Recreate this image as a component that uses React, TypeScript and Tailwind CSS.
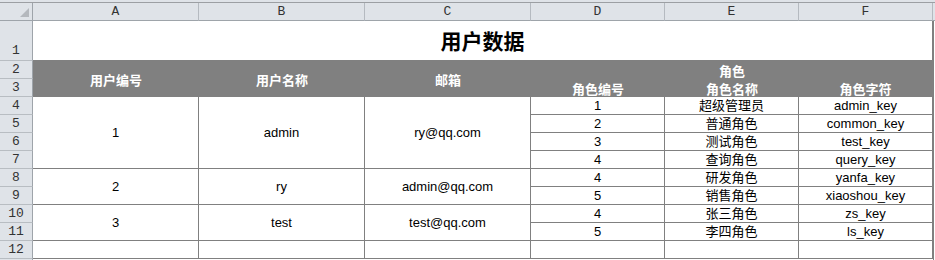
import React from "react";

const roles = [
  { id: "1", name: "超级管理员", key: "admin_key", row: "row-start-6" },
  { id: "2", name: "普通角色", key: "common_key", row: "row-start-7" },
  { id: "3", name: "测试角色", key: "test_key", row: "row-start-8" },
  { id: "4", name: "查询角色", key: "query_key", row: "row-start-9" },
  { id: "4", name: "研发角色", key: "yanfa_key", row: "row-start-10" },
  { id: "5", name: "销售角色", key: "xiaoshou_key", row: "row-start-11" },
  { id: "4", name: "张三角色", key: "zs_key", row: "row-start-12" },
  { id: "5", name: "李四角色", key: "ls_key", row: "row-start-13" },
];

const users = [
  { id: "1", name: "admin", email: "ry@qq.com", rows: "row-start-6 row-span-4" },
  { id: "2", name: "ry", email: "admin@qq.com", rows: "row-start-10 row-span-2" },
  { id: "3", name: "test", email: "test@qq.com", rows: "row-start-12 row-span-2" },
];

// Excel row number -> grid row
const rowHeads = [
  { n: "1", row: "row-start-3" },
  { n: "2", row: "row-start-4" },
  { n: "3", row: "row-start-5" },
  { n: "4", row: "row-start-6" },
  { n: "5", row: "row-start-7" },
  { n: "6", row: "row-start-8" },
  { n: "7", row: "row-start-9" },
  { n: "8", row: "row-start-10" },
  { n: "9", row: "row-start-11" },
  { n: "10", row: "row-start-12" },
  { n: "11", row: "row-start-13" },
  { n: "12", row: "row-start-14" },
];

const colHeads = [
  { l: "A", col: "col-start-2" },
  { l: "B", col: "col-start-3" },
  { l: "C", col: "col-start-4" },
  { l: "D", col: "col-start-5" },
  { l: "E", col: "col-start-6" },
  { l: "F", col: "col-start-7" },
];

const cell =
  "flex items-center justify-center border-r border-b border-[#808080] bg-white text-[13px] text-black leading-none font-['Liberation_Sans','Noto_Sans_CJK_SC',sans-serif]";
const head =
  "flex justify-center bg-[#808080] text-[13px] font-bold text-white leading-none font-['Noto_Sans_CJK_SC','Liberation_Sans',sans-serif]";
const gutter =
  "bg-[#dfe3e8] text-[13px] text-[#333] leading-none font-['Liberation_Mono',monospace]";

export default function App() {
  return (
    <div className="w-[935px] h-[260px] overflow-hidden bg-white">
      <div className="grid grid-cols-[33px_166px_166px_166px_134px_134px_134px_2px] grid-rows-[3px_18px_40px_18px_18px_18px_18px_18px_18px_18px_18px_18px_18px_18px_1px]">
        {/* top strip */}
        <div className="col-span-8 row-start-1 bg-[#dfe3e8] border-b border-[#9c9fa3]" />

        {/* corner */}
        <div className={`${gutter} col-start-1 row-start-2 relative border-r border-b border-[#9ea4aa]`}>
          <svg className="absolute left-[20px] top-[5px]" width="9" height="9" viewBox="0 0 9 9">
            <polygon points="9,0 9,9 0,9" fill="#b4b8bd" />
          </svg>
        </div>

        {/* column letters */}
        {colHeads.map((c) => (
          <div
            key={c.l}
            className={`${gutter} ${c.col} row-start-2 flex items-center justify-center border-r border-b border-r-[#b5bac0] border-b-[#9ea4aa]`}
          >
            {c.l}
          </div>
        ))}
        <div className="col-start-8 row-start-2 bg-[#dfe3e8] border-b border-[#9ea4aa]" />

        {/* row numbers */}
        {rowHeads.map((r) => (
          <div
            key={r.n}
            className={`${gutter} col-start-1 ${r.row} flex justify-center border-r border-b border-r-[#9ea4aa] border-b-[#b8bdc2] ${
              r.n === "1" ? "items-end pb-[3px]" : "items-center"
            }`}
          >
            {r.n}
          </div>
        ))}
        <div className={`${gutter} col-start-1 row-start-15 border-r border-[#9ea4aa]`} />

        {/* title */}
        <div className="col-start-2 col-span-6 row-start-3 flex items-center justify-center bg-white border-r border-b border-[#808080] text-[21px] font-bold text-black leading-none font-['Noto_Sans_CJK_SC',serif]">
          用户数据
        </div>

        {/* table header */}
        <div className={`${head} col-start-2 row-start-4 row-span-2 items-center`}>用户编号</div>
        <div className={`${head} col-start-3 row-start-4 row-span-2 items-center`}>用户名称</div>
        <div className={`${head} col-start-4 row-start-4 row-span-2 items-center`}>邮箱</div>
        <div className={`${head} col-start-5 row-start-4`} />
        <div className={`${head} col-start-5 row-start-5 items-center`}>角色编号</div>
        <div className={`${head} col-start-6 row-start-4 items-center`}>角色</div>
        <div className={`${head} col-start-6 row-start-5 items-center`}>角色名称</div>
        <div className={`${head} col-start-7 row-start-4`} />
        <div className={`${head} col-start-7 row-start-5 items-center border-r border-[#808080]`}>角色字符</div>

        {/* users */}
        {users.map((u) => (
          <React.Fragment key={u.id}>
            <div className={`${cell} col-start-2 ${u.rows}`}>{u.id}</div>
            <div className={`${cell} col-start-3 ${u.rows}`}>{u.name}</div>
            <div className={`${cell} col-start-4 ${u.rows}`}>{u.email}</div>
          </React.Fragment>
        ))}

        {/* roles */}
        {roles.map((r) => (
          <React.Fragment key={r.key}>
            <div className={`${cell} col-start-5 ${r.row}`}>{r.id}</div>
            <div className={`${cell} col-start-6 ${r.row}`}>{r.name}</div>
            <div className={`${cell} col-start-7 ${r.row}`}>{r.key}</div>
          </React.Fragment>
        ))}

        {/* empty row 12 */}
        <div className={`${cell} col-start-2 row-start-14`} />
        <div className={`${cell} col-start-3 row-start-14`} />
        <div className={`${cell} col-start-4 row-start-14`} />
        <div className={`${cell} col-start-5 row-start-14`} />
        <div className={`${cell} col-start-6 row-start-14`} />
        <div className={`${cell} col-start-7 row-start-14`} />

        {/* right edge beyond F */}
        <div className="col-start-8 row-start-3 row-span-13 bg-white border-l border-[#808080]" />
      </div>
    </div>
  );
}
